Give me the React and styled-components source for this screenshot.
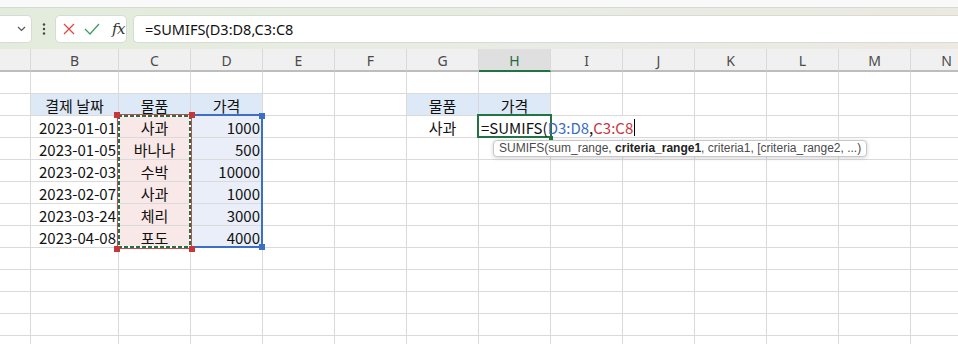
import React from "react"
import styled, { createGlobalStyle } from "styled-components"

const GlobalStyle = createGlobalStyle`
    html, body {
        margin: 0;
        padding: 0;
        background: #ffffff;
    }
    body {
        font-family: "Noto Sans CJK KR", "Noto Sans", sans-serif;
    }
`

const COL_WIDTHS = [31, 88, 72, 72, 72, 72, 72, 72, 72, 72, 72, 72, 72, 72]
const COL_NAMES = ["", "B", "C", "D", "E", "F", "G", "H", "I", "J", "K", "L", "M", "N"]
const HEADER_H = 23
const ROW_H = 22

// x of the left edge of column i (0 based), relative to the sheet
const colX = i => COL_WIDTHS.slice(0, i).reduce((a, b) => a + b, 0)
// y of the top of row r (1 based), relative to the sheet
const rowY = r => HEADER_H + (r - 1) * ROW_H

const BLUE_HEAD = "#dde9f6"
const PINK = "#f9e8e8"
const PALE_BLUE = "#e9eef8"

const rows = [
    {},
    {
        B: { t: "결제 날짜", a: "center", f: BLUE_HEAD },
        C: { t: "물품", a: "center", f: BLUE_HEAD },
        D: { t: "가격", a: "center", f: BLUE_HEAD },
        G: { t: "물품", a: "center", f: BLUE_HEAD },
        H: { t: "가격", a: "center", f: BLUE_HEAD },
    },
    { B: "2023-01-01", C: "사과", D: "1000", G: { t: "사과", a: "center" }, H: { bare: true }, I: { bare: true } },
    { B: "2023-01-05", C: "바나나", D: "500" },
    { B: "2023-02-03", C: "수박", D: "10000" },
    { B: "2023-02-07", C: "사과", D: "1000" },
    { B: "2023-03-24", C: "체리", D: "3000" },
    { B: "2023-04-08", C: "포도", D: "4000" },
    {}, {}, {}, {}, {},
]

const cellProps = (row, col, r) => {
    const v = row[col]
    if (v && typeof v === "object") return v
    if (r >= 3 && r <= 8) {
        if (col === "B") return { t: v, a: "right" }
        if (col === "C") return { t: v, a: "center", f: PINK }
        if (col === "D") return { t: v, a: "right", f: PALE_BLUE }
    }
    return { t: v }
}

const App = () => {
    return (
        <>
            <GlobalStyle />
            <Window>
                <RibbonEdge />
                <FormulaBand>
                    <NameBox>
                        <svg width="9" height="6" viewBox="0 0 9 6">
                            <polyline points="1,1 4.5,4.5 8,1" fill="none" stroke="#555" strokeWidth="1.2" />
                        </svg>
                    </NameBox>
                    <Grip>
                        <svg width="4" height="12" viewBox="0 0 4 12">
                            <circle cx="2" cy="1.5" r="1.2" fill="#444" />
                            <circle cx="2" cy="6" r="1.2" fill="#444" />
                            <circle cx="2" cy="10.5" r="1.2" fill="#444" />
                        </svg>
                    </Grip>
                    <FxBox>
                        <svg width="12" height="12" viewBox="0 0 12 12">
                            <path d="M1 1 L11 11 M11 1 L1 11" stroke="#e04848" strokeWidth="1.3" fill="none" />
                        </svg>
                        <svg width="16" height="12" viewBox="0 0 16 12">
                            <polyline points="1,6 6,11 15,1" fill="none" stroke="#3f9d62" strokeWidth="1.3" />
                        </svg>
                        <FxLabel>fx</FxLabel>
                    </FxBox>
                    <FormulaInput>=SUMIFS(D3:D8,C3:C8</FormulaInput>
                </FormulaBand>

                <Sheet>
                    {COL_NAMES.map((name, i) => (
                        <HeaderCell key={`h${i}`} $active={name === "H"}>{name}</HeaderCell>
                    ))}
                    {rows.map((row, ri) =>
                        COL_NAMES.map((col, ci) => {
                            const p = cellProps(row, col, ri + 1)
                            return (
                                <Cell key={`${ri}-${ci}`} $align={p.a} $fill={p.f} $bare={p.bare}>
                                    {p.t}
                                </Cell>
                            )
                        })
                    )}

                    <BlueRange
                        style={{ left: colX(3) - 2, top: rowY(3) - 2, width: COL_WIDTHS[3] + 2, height: 6 * ROW_H + 2 }}
                    >
                        <Handle $color="#3d6fc5" $right $top />
                        <Handle $color="#3d6fc5" $right />
                    </BlueRange>

                    <RedRange
                        style={{ left: colX(2) - 2, top: rowY(3) - 2, width: COL_WIDTHS[2] + 3, height: 6 * ROW_H + 3 }}
                    >
                        <Ants />
                        <Handle $color="#c4383c" $top />
                        <Handle $color="#c4383c" $right $top />
                        <Handle $color="#c4383c" />
                        <Handle $color="#c4383c" $right />
                    </RedRange>

                    <ActiveCell
                        style={{ left: colX(7) - 2, top: rowY(3) - 2, width: COL_WIDTHS[7] + 3, height: ROW_H + 2 }}
                    >
                        <FillHandle />
                    </ActiveCell>

                    <EditText style={{ left: colX(7) + 2, top: rowY(3) }}>
                        =SUMIFS(<Ref $color="#3a6cc4">D3:D8</Ref>,<Ref $color="#c8353c">C3:C8</Ref>
                        <Caret />
                    </EditText>

                    <Tooltip style={{ left: colX(7) + 14, top: rowY(3) + 24 }}>
                        SUMIFS(sum_range, <b>criteria_range1</b>, criteria1, [criteria_range2, ...)
                    </Tooltip>
                </Sheet>
            </Window>
        </>
    )
}

export default App

const Window = styled.div`
    width: 958px;
    height: 344px;
    overflow: hidden;
    background: #ffffff;
`

const RibbonEdge = styled.div`
    height: 7px;
    background: #f9f9f9;
    border-bottom: 1px solid #d5dbd1;
`

const FormulaBand = styled.div`
    height: 28px;
    padding: 7px 0 6px;
    display: flex;
    align-items: stretch;
    background: linear-gradient(90deg, #e3ecdc 0%, #e8ece4 55%, #ece8e2 100%);
`

const NameBox = styled.div`
    width: 32px;
    box-sizing: border-box;
    background: #ffffff;
    border: 1px solid #d6dcd2;
    border-left: none;
    border-radius: 0 5px 5px 0;
    display: flex;
    align-items: center;
    justify-content: flex-end;
    padding-right: 5px;
`

const Grip = styled.div`
    width: 23px;
    display: flex;
    align-items: center;
    justify-content: center;
`

const FxBox = styled.div`
    width: 72px;
    box-sizing: border-box;
    background: #ffffff;
    border: 1px solid #d6dcd2;
    border-radius: 5px;
    display: flex;
    align-items: center;
    gap: 9px;
    padding-left: 7px;
`

const FxLabel = styled.span`
    font-family: "DejaVu Serif", "Liberation Serif", serif;
    font-style: italic;
    font-size: 15px;
    color: #333333;
    margin-left: 3px;
    letter-spacing: -0.5px;
`

const FormulaInput = styled.div`
    flex: 1;
    margin-left: 6px;
    box-sizing: border-box;
    background: #ffffff;
    border: 1px solid #d6dcd2;
    border-right: none;
    border-radius: 5px 0 0 5px;
    display: flex;
    align-items: center;
    padding-left: 11px;
    font-family: "Noto Sans", "Open Sans", sans-serif;
    font-size: 14.5px;
    color: #111111;
`

const Sheet = styled.div`
    position: relative;
    display: grid;
    grid-template-columns: ${COL_WIDTHS.map(w => `${w}px`).join(" ")};
    grid-template-rows: ${HEADER_H}px;
    grid-auto-rows: ${ROW_H}px;
`

const HeaderCell = styled.div`
    box-sizing: border-box;
    background: ${p => (p.$active ? "#dfdfdf" : "#f0f0f0")};
    border-right: 1px solid #d9d9d9;
    border-bottom: 2px solid ${p => (p.$active ? "#217346" : "#bdbdbd")};
    display: flex;
    align-items: center;
    justify-content: center;
    font-family: "Noto Sans", "Open Sans", sans-serif;
    font-size: 14px;
    color: ${p => (p.$active ? "#1d6b40" : "#4a4a4a")};
    padding-top: 1px;
`

const Cell = styled.div`
    box-sizing: border-box;
    background: ${p => p.$fill || "#ffffff"};
    border-right: 1px solid ${p => (p.$bare ? p.$fill || "#ffffff" : "#dadada")};
    border-bottom: 1px solid #dadada;
    display: flex;
    align-items: center;
    justify-content: ${p => (p.$align === "right" ? "flex-end" : p.$align === "center" ? "center" : "flex-start")};
    padding: 1px 2px 0;
    font-size: 15px;
    color: #111111;
    white-space: nowrap;
    overflow: hidden;
`

const BlueRange = styled.div`
    position: absolute;
    box-sizing: border-box;
    border: 2px solid #3d6fc5;
`

const RedRange = styled.div`
    position: absolute;
    box-sizing: border-box;
    border: 1px solid #c84a4c;
`

const dash = dir => `repeating-linear-gradient(${dir}, #217346 0 4px, #ffffff 4px 6px)`

const Ants = styled.div`
    position: absolute;
    inset: 0;
    background:
        ${dash("90deg")} top / 100% 2px no-repeat,
        ${dash("90deg")} bottom / 100% 2px no-repeat,
        ${dash("180deg")} left / 2px 100% no-repeat,
        ${dash("180deg")} right / 2px 100% no-repeat;
`

const Handle = styled.div`
    position: absolute;
    width: 6px;
    height: 6px;
    background: ${p => p.$color};
    ${p => (p.$right ? "right: -4px;" : "left: -4px;")}
    ${p => (p.$top ? "top: -3px;" : "bottom: -4px;")}
`

const ActiveCell = styled.div`
    position: absolute;
    box-sizing: border-box;
    border: 2px solid #217346;
`

const FillHandle = styled.div`
    position: absolute;
    right: -3px;
    bottom: -4px;
    width: 4px;
    height: 4px;
    background: #217346;
`

const EditText = styled.div`
    position: absolute;
    height: 21px;
    display: flex;
    align-items: center;
    padding-top: 1px;
    font-size: 15px;
    color: #111111;
    white-space: nowrap;
    z-index: 2;
`

const Ref = styled.span`
    color: ${p => p.$color};
`

const Caret = styled.span`
    display: inline-block;
    width: 1px;
    height: 17px;
    margin-left: 1px;
    background: #000000;
`

const Tooltip = styled.div`
    position: absolute;
    height: 17px;
    box-sizing: border-box;
    padding: 0 5px;
    line-height: 15px;
    background: #ffffff;
    border: 1px solid #c9c9c9;
    border-radius: 4px;
    box-shadow: 0 1px 4px rgba(0, 0, 0, 0.18);
    font-family: "Liberation Sans", "Noto Sans", sans-serif;
    font-size: 12px;
    color: #4a4a4a;
    white-space: nowrap;
    z-index: 3;

    b {
        color: #222222;
    }
`
